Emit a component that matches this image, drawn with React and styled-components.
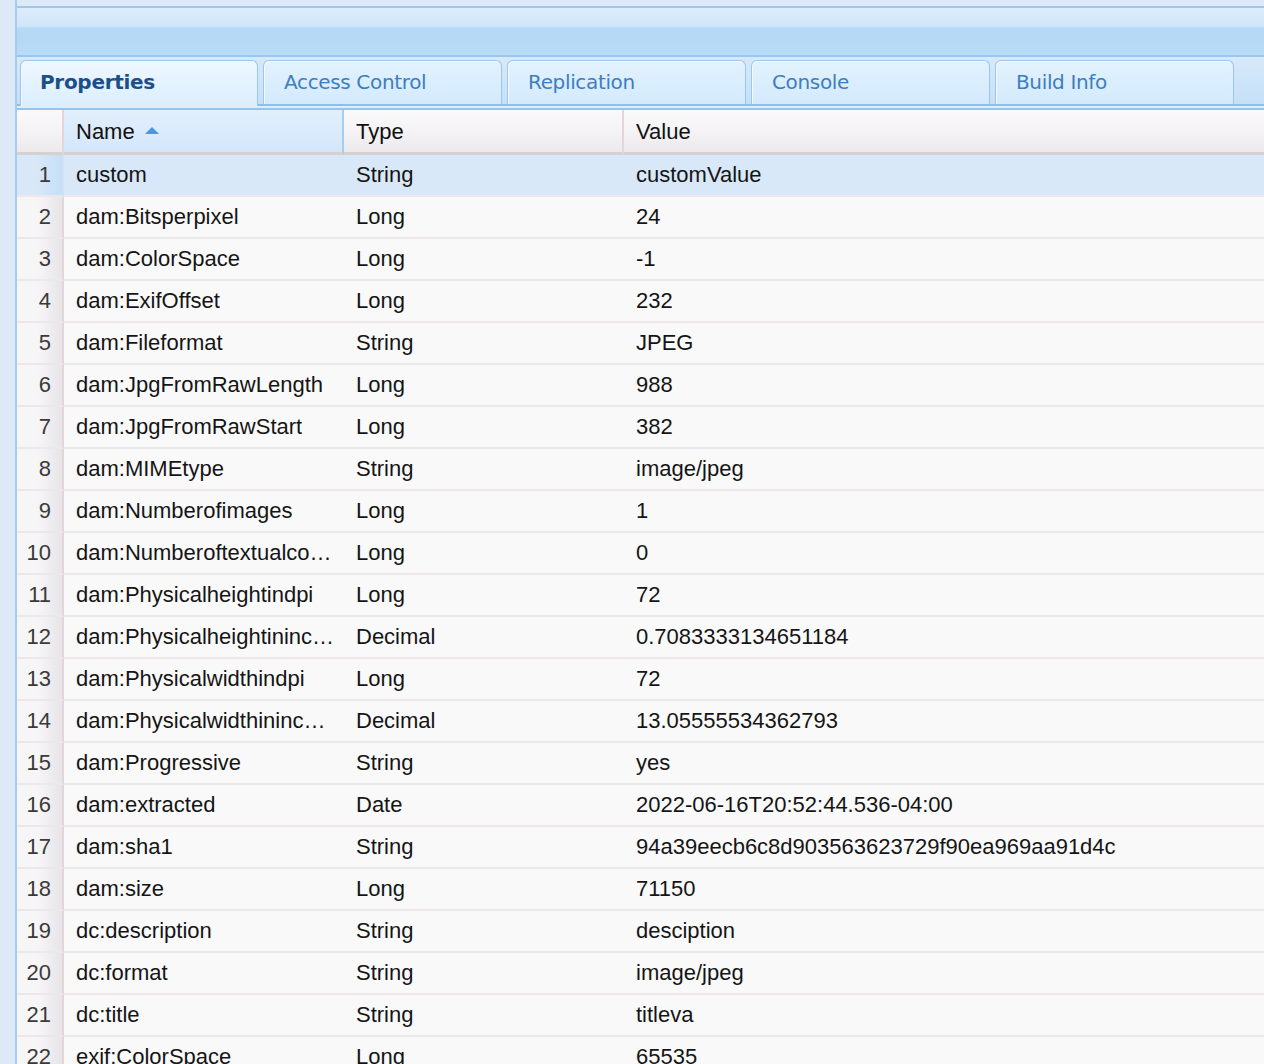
import React from "react";
import styled, { createGlobalStyle } from "styled-components";

const Global = createGlobalStyle`
  html, body { margin: 0; padding: 0; background: #dce9f7; }
  body { font-family: "Liberation Sans", Arial, sans-serif; overflow: hidden; }
`;

const Page = styled.div`
  display: flex;
  height: 1064px;
  overflow: hidden;
`;

const Gutter = styled.div`
  width: 15px;
  flex: none;
  background: #dde9f6;
  border-right: 2px solid #a5ccee;
`;

const Main = styled.div`
  flex: 1;
  min-width: 0;
  padding-top: 6px;
  display: flex;
  flex-direction: column;
  & > * { flex: none; }
`;

const HeaderBar = styled.div`
  height: 47px;
  border-top: 2px solid #9cc6ec;
  border-bottom: 2px solid #9cc6ec;
  background: linear-gradient(#dcecfb 0%, #d0e6fa 38%, #b4d8f5 44%, #b8dbf6 100%);
`;

const TabStrip = styled.div`
  display: flex;
  align-items: flex-end;
  gap: 5px;
  height: 47px;
  padding-left: 3px;
  background: linear-gradient(#d7e9fa, #c5e0f7);
  border-bottom: 2px solid #8fbfe8;
`;

const Tab = styled.div`
  width: 239px;
  height: 44px;
  box-sizing: border-box;
  border: 1px solid #9cc6ec;
  border-bottom: none;
  border-radius: 6px 6px 0 0;
  box-shadow: inset 1px 1px 0 #f2f9ff;
  background: ${(p) =>
    p.$active
      ? "linear-gradient(#eef7ff, #dbeefe)"
      : "linear-gradient(#e3f2fe, #d3eafd)"};
  padding: 9px 0 0 ${(p) => (p.$active ? 19 : 20)}px;
  font-family: "DejaVu Sans", Verdana, sans-serif;
  font-size: 20px;
  font-weight: ${(p) => (p.$active ? 700 : 400)};
  color: ${(p) => (p.$active ? "#1b4f8a" : "#3c7ec0")};
  letter-spacing: ${(p) => (p.$active ? "-0.3px" : "-0.35px")};
  ${(p) => (p.$active ? "width: 238px; height: 46px; margin-bottom: -2px; position: relative;" : "")}
`;

const Rule = styled.div`
  height: 2px;
  background: #dbeefd;
  border-bottom: 2px solid #99c4ea;
`;

const Grid = styled.div`
  display: grid;
  grid-template-columns: 47px 280px 280px 1fr;
`;

const HeadCell = styled.div`
  height: 45px;
  box-sizing: border-box;
  display: flex;
  align-items: center;
  padding-left: ${(p) => (p.$num ? 0 : 12)}px;
  padding-top: 1px;
  font-size: 22px;
  color: #111;
  border-bottom: 3px solid #d6d0d0;
  border-right: ${(p) => (p.$sorted ? "2px solid #a7cdef" : p.$last ? "none" : "2px solid #e2d6d8")};
  background: ${(p) =>
    p.$sorted
      ? "linear-gradient(#e2effc, #d3e7fa)"
      : "linear-gradient(#fbfafb, #f4f2f4 55%, #ebe9ec)"};
  gap: 10px;
`;

const SortArrow = styled.span`
  width: 0;
  height: 0;
  border-left: 7px solid transparent;
  border-right: 7px solid transparent;
  border-bottom: 7px solid #4d97dc;
  margin-top: -2px;
`;

const Cell = styled.div`
  height: 42px;
  box-sizing: border-box;
  display: flex;
  align-items: center;
  padding-left: 12px;
  font-size: 22px;
  color: #151515;
  white-space: nowrap;
  overflow: hidden;
  border-bottom: 2px solid #ebe7eb;
  background: ${(p) => (p.$sel ? "#d9e8f8" : "#faf9fa")};
  span {
    overflow: hidden;
    text-overflow: ellipsis;
    max-width: 260px;
  }
`;

const NumCell = styled.div`
  height: 42px;
  box-sizing: border-box;
  display: flex;
  align-items: center;
  justify-content: flex-end;
  padding-right: 11px;
  font-size: 22px;
  color: #3a3a3a;
  border-bottom: 2px solid #ebe7eb;
  border-right: 2px solid ${(p) => (p.$sel ? "#cfe2f6" : "#e3d6da")};
  background: ${(p) =>
    p.$sel
      ? "linear-gradient(90deg, #d9e8f8 40%, #c6dff7)"
      : "linear-gradient(90deg, #f7f6f7 45%, #e8e4e8)"};
`;

const rows = [
  ["custom", "String", "customValue"],
  ["dam:Bitsperpixel", "Long", "24"],
  ["dam:ColorSpace", "Long", "-1"],
  ["dam:ExifOffset", "Long", "232"],
  ["dam:Fileformat", "String", "JPEG"],
  ["dam:JpgFromRawLength", "Long", "988"],
  ["dam:JpgFromRawStart", "Long", "382"],
  ["dam:MIMEtype", "String", "image/jpeg"],
  ["dam:Numberofimages", "Long", "1"],
  ["dam:Numberoftextualcomments", "Long", "0"],
  ["dam:Physicalheightindpi", "Long", "72"],
  ["dam:Physicalheightininches", "Decimal", "0.7083333134651184"],
  ["dam:Physicalwidthindpi", "Long", "72"],
  ["dam:Physicalwidthininches", "Decimal", "13.05555534362793"],
  ["dam:Progressive", "String", "yes"],
  ["dam:extracted", "Date", "2022-06-16T20:52:44.536-04:00"],
  ["dam:sha1", "String", "94a39eecb6c8d903563623729f90ea969aa91d4c"],
  ["dam:size", "Long", "71150"],
  ["dc:description", "String", "desciption"],
  ["dc:format", "String", "image/jpeg"],
  ["dc:title", "String", "titleva"],
  ["exif:ColorSpace", "Long", "65535"],
];

const tabs = ["Properties", "Access Control", "Replication", "Console", "Build Info"];

export default function App() {
  return (
    <Page>
      <Global />
      <Gutter />
      <Main>
        <HeaderBar />
        <TabStrip>
          {tabs.map((t, i) => (
            <Tab key={t} $active={i === 0}>
              {t}
            </Tab>
          ))}
        </TabStrip>
        <Rule />
        <Grid>
          <HeadCell $num />
          <HeadCell $sorted>
            Name <SortArrow />
          </HeadCell>
          <HeadCell>Type</HeadCell>
          <HeadCell $last>Value</HeadCell>
          {rows.map((r, i) => (
            <React.Fragment key={i}>
              <NumCell $sel={i === 0}>{i + 1}</NumCell>
              <Cell $sel={i === 0}>
                <span>{r[0]}</span>
              </Cell>
              <Cell $sel={i === 0}>{r[1]}</Cell>
              <Cell $sel={i === 0}>{r[2]}</Cell>
            </React.Fragment>
          ))}
        </Grid>
      </Main>
    </Page>
  );
}
